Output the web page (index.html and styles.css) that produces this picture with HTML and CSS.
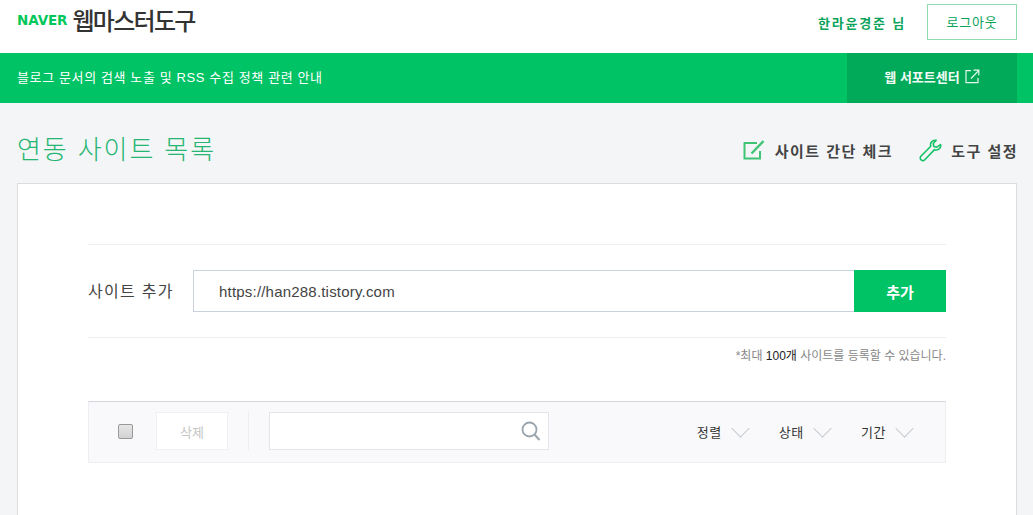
FILE: index.html
```html
<!DOCTYPE html>
<html lang="ko">
<head>
    <meta charset="UTF-8">
    <title>네이버 웹마스터도구</title>
    <link rel="stylesheet" href="styles.css">
</head>
<body>
    <!-- Header -->
    <header class="header">
        <div class="logo">
            <span class="logo-naver">NAVER</span>
            <span class="logo-title">웹마스터도구</span>
        </div>
        <div class="user">
            <span class="user-name">한라윤경준 님</span>
            <a class="logout">로그아웃</a>
        </div>
    </header>

    <!-- Notice bar -->
    <div class="notice">
        <span class="notice-text">블로그 문서의 검색 노출 및 RSS 수집 정책 관련 안내</span>
        <a class="support">웹 서포트센터
            <svg width="15" height="15" viewBox="0 0 15 15" fill="none" stroke="#e6f8ee" stroke-width="1.2">
                <path d="M6 1.6H1v12h12V9"/>
                <path d="M6 9.5 13.6 1.6M8.5 1.2h5.3v5"/>
            </svg>
        </a>
    </div>

    <main class="main">
        <div class="title-row">
            <h1 class="page-title">연동 사이트 목록</h1>
            <div class="tools">
                <a class="tool">
                    <svg width="23" height="20" viewBox="0 0 23 20" fill="none" stroke="#3fc474" stroke-width="2">
                        <path d="M14 3H1.5v15.5H17V11"/>
                        <path d="M8.5 13.5 20.5 1" stroke-width="2.4"/>
                    </svg>
                    사이트 간단 체크
                </a>
                <a class="tool">
                    <svg width="23" height="23" viewBox="0 0 23 23" fill="none" stroke="#12c265" stroke-width="1.6" stroke-linejoin="round">
                        <path d="M21.6 5.6c.5 2.6-1.300 5.400-4.300 5.400-.7 0-1.300-.1-1.800-.4L5.800 20.700c-1.100 1.100-2.800 1.100-3.800.1-1.100-1.100-1-2.700.1-3.800L11.800 7.300c-.2-.6-.4-1.200-.3-1.900C11.600 2.700 14.500.7 17.200 1.300l-3 3.200.6 2.900 2.900.8z"/>
                    </svg>
                    도구 설정
                </a>
            </div>
        </div>

        <section class="card">
            <div class="add-row">
                <label class="add-label">사이트 추가</label>
                <div class="add-field">
                    <input class="add-input" type="text" value="https://han288.tistory.com">
                    <button class="add-btn">추가</button>
                </div>
            </div>
            <p class="add-note">*최대 <b>100개</b> 사이트를 등록할 수 있습니다.</p>

            <div class="toolbar">
                <span class="check"></span>
                <button class="del-btn">삭제</button>
                <span class="divider"></span>
                <div class="search">
                    <svg width="20" height="20" viewBox="0 0 20 20" fill="none" stroke="#9aa5ae" stroke-width="1.800">
                        <circle cx="8.500" cy="8.500" r="7"/>
                        <path d="M13.500 13.500 18.500 19" stroke-width="2"/>
                    </svg>
                </div>
                <div class="filters">
                    <a class="filter">정렬 <i class="arrow"></i></a>
                    <a class="filter">상태 <i class="arrow"></i></a>
                    <a class="filter">기간 <i class="arrow"></i></a>
                </div>
            </div>
        </section>
    </main>
</body>
</html>
```

FILE: styles.css
```css
/* General Styling */
html, body {
    height: 100%;
    overflow: hidden;
}

body {
    margin: 0;
    background: #f3f5f7;
    color: #333;
    font-family: 'Liberation Sans', 'Noto Sans CJK KR', sans-serif;
    font-size: 13px;
}

a {
    text-decoration: none;
}

/* Header */
.header {
    height: 53px;
    background: #fff;
    padding: 0 16px 0 17px;
    display: flex;
    justify-content: space-between;
    align-items: flex-start;
}

.logo {
    display: flex;
    align-items: center;
    gap: 5px;
    height: 39px;
}

.logo-naver {
    font-family: 'DejaVu Sans', sans-serif;
    font-weight: 700;
    font-size: 13.5px;
    color: #03c75a;
    letter-spacing: -0.1px;
}

.logo-title {
    font-size: 24px;
    font-weight: 500;
    letter-spacing: -1.7px;
    color: #333;
}

.user {
    display: flex;
    align-items: center;
    gap: 21px;
    padding-top: 4px;
}

.user-name {
    font-size: 13px;
    font-weight: 700;
    color: #0aa35a;
    letter-spacing: 1.8px;
}

.logout {
    width: 88px;
    height: 32px;
    padding-bottom: 2px;
    border: 1px solid #8fdcb0;
    background: #fff;
    color: #0aa35a;
    font-size: 13px;
    letter-spacing: 0.8px;
    display: flex;
    align-items: center;
    justify-content: center;
}

/* Notice bar */
.notice {
    height: 50px;
    background: #00c365;
    padding: 0 16px 0 17px;
    display: flex;
    justify-content: space-between;
    align-items: center;
}

.notice-text {
    color: #fff;
    font-size: 13px;
    letter-spacing: 0.62px;
    padding-bottom: 3px;
}

.support {
    width: 170px;
    height: 47px;
    padding-bottom: 3px;
    background: #00aa59;
    color: #f2fbf6;
    font-size: 13px;
    font-weight: 700;
    display: flex;
    align-items: center;
    justify-content: center;
    gap: 5px;
}

/* Page body */
.main {
    padding: 0 16px 0 17px;
}

.title-row {
    height: 80px;
    display: flex;
    justify-content: space-between;
    align-items: center;
}

.page-title {
    margin: 9px 0 0;
    font-size: 26px;
    font-weight: 300;
    color: #27b573;
    letter-spacing: 1.9px;
}

.tools {
    display: flex;
    gap: 26px;
    padding-top: 14px;
    margin-right: -1px;
}

.tool {
    display: flex;
    align-items: center;
    gap: 9px;
    font-size: 15px;
    font-weight: 700;
    color: #444;
    letter-spacing: 1.5px;
}

/* Card */
.card {
    height: 400px;
    background: #fff;
    border: 1px solid #ddd;
    padding: 60px 70px 0;
}

.add-row {
    height: 92px;
    border-top: 1px solid #eee;
    border-bottom: 1px solid #eee;
    display: flex;
    align-items: center;
    gap: 20px;
}

.add-label {
    width: 85px;
    font-size: 16px;
    color: #444;
    letter-spacing: 1.3px;
    padding-bottom: 2px;
    white-space: nowrap;
}

.add-field {
    flex: 1;
    display: flex;
    height: 42px;
}

.add-input {
    flex: 1;
    min-width: 0;
    box-sizing: border-box;
    height: 42px;
    border: 1px solid #ccd2dc;
    border-right: 0;
    padding: 0 25px;
    font-family: 'Liberation Sans', sans-serif;
    font-size: 15px;
    letter-spacing: 0.2px;
    color: #444;
    outline: none;
}

.add-btn {
    width: 92px;
    border: 0;
    background: #00c365;
    color: #fff;
    font-family: inherit;
    font-size: 15px;
    font-weight: 700;
}

.add-note {
    margin: 8px 0 0;
    height: 55px;
    text-align: right;
    font-size: 12px;
    color: #888;
}

.add-note b {
    font-weight: 400;
    color: #222;
}

/* List toolbar */
.toolbar {
    height: 58px;
    padding-bottom: 2px;
    background: #f9f9fb;
    border: 1px solid #eceef1;
    border-top-color: #d4d6de;
    display: flex;
    align-items: center;
    padding-left: 29px;
}

.check {
    width: 13px;
    height: 13px;
    border: 1px solid #999;
    border-radius: 2px;
    background: linear-gradient(#e6e6e6, #d2d2d2);
}

.del-btn {
    width: 72px;
    height: 38px;
    margin-left: 23px;
    background: #fff;
    border: 1px solid #eff0f2;
    color: #c4c4c4;
    font-family: inherit;
    font-size: 13px;
}

.divider {
    width: 1px;
    height: 38px;
    margin: 0 20px;
    background: #eceef1;
}

.search {
    box-sizing: border-box;
    width: 280px;
    height: 38px;
    background: #fff;
    border: 1px solid #e2e5e9;
    display: flex;
    align-items: center;
    justify-content: flex-end;
    padding-right: 7px;
}

.filters {
    margin-left: auto;
    display: flex;
    gap: 29px;
    padding-right: 31px;
}

.filter {
    display: flex;
    align-items: center;
    gap: 9px;
    font-size: 13px;
    color: #333;
    letter-spacing: 0.6px;
}

.arrow {
    width: 12px;
    height: 12px;
    margin: -6px 3px 0;
    border-right: 1px solid #c6cad0;
    border-bottom: 1px solid #c6cad0;
    transform: rotate(45deg);
}
```
